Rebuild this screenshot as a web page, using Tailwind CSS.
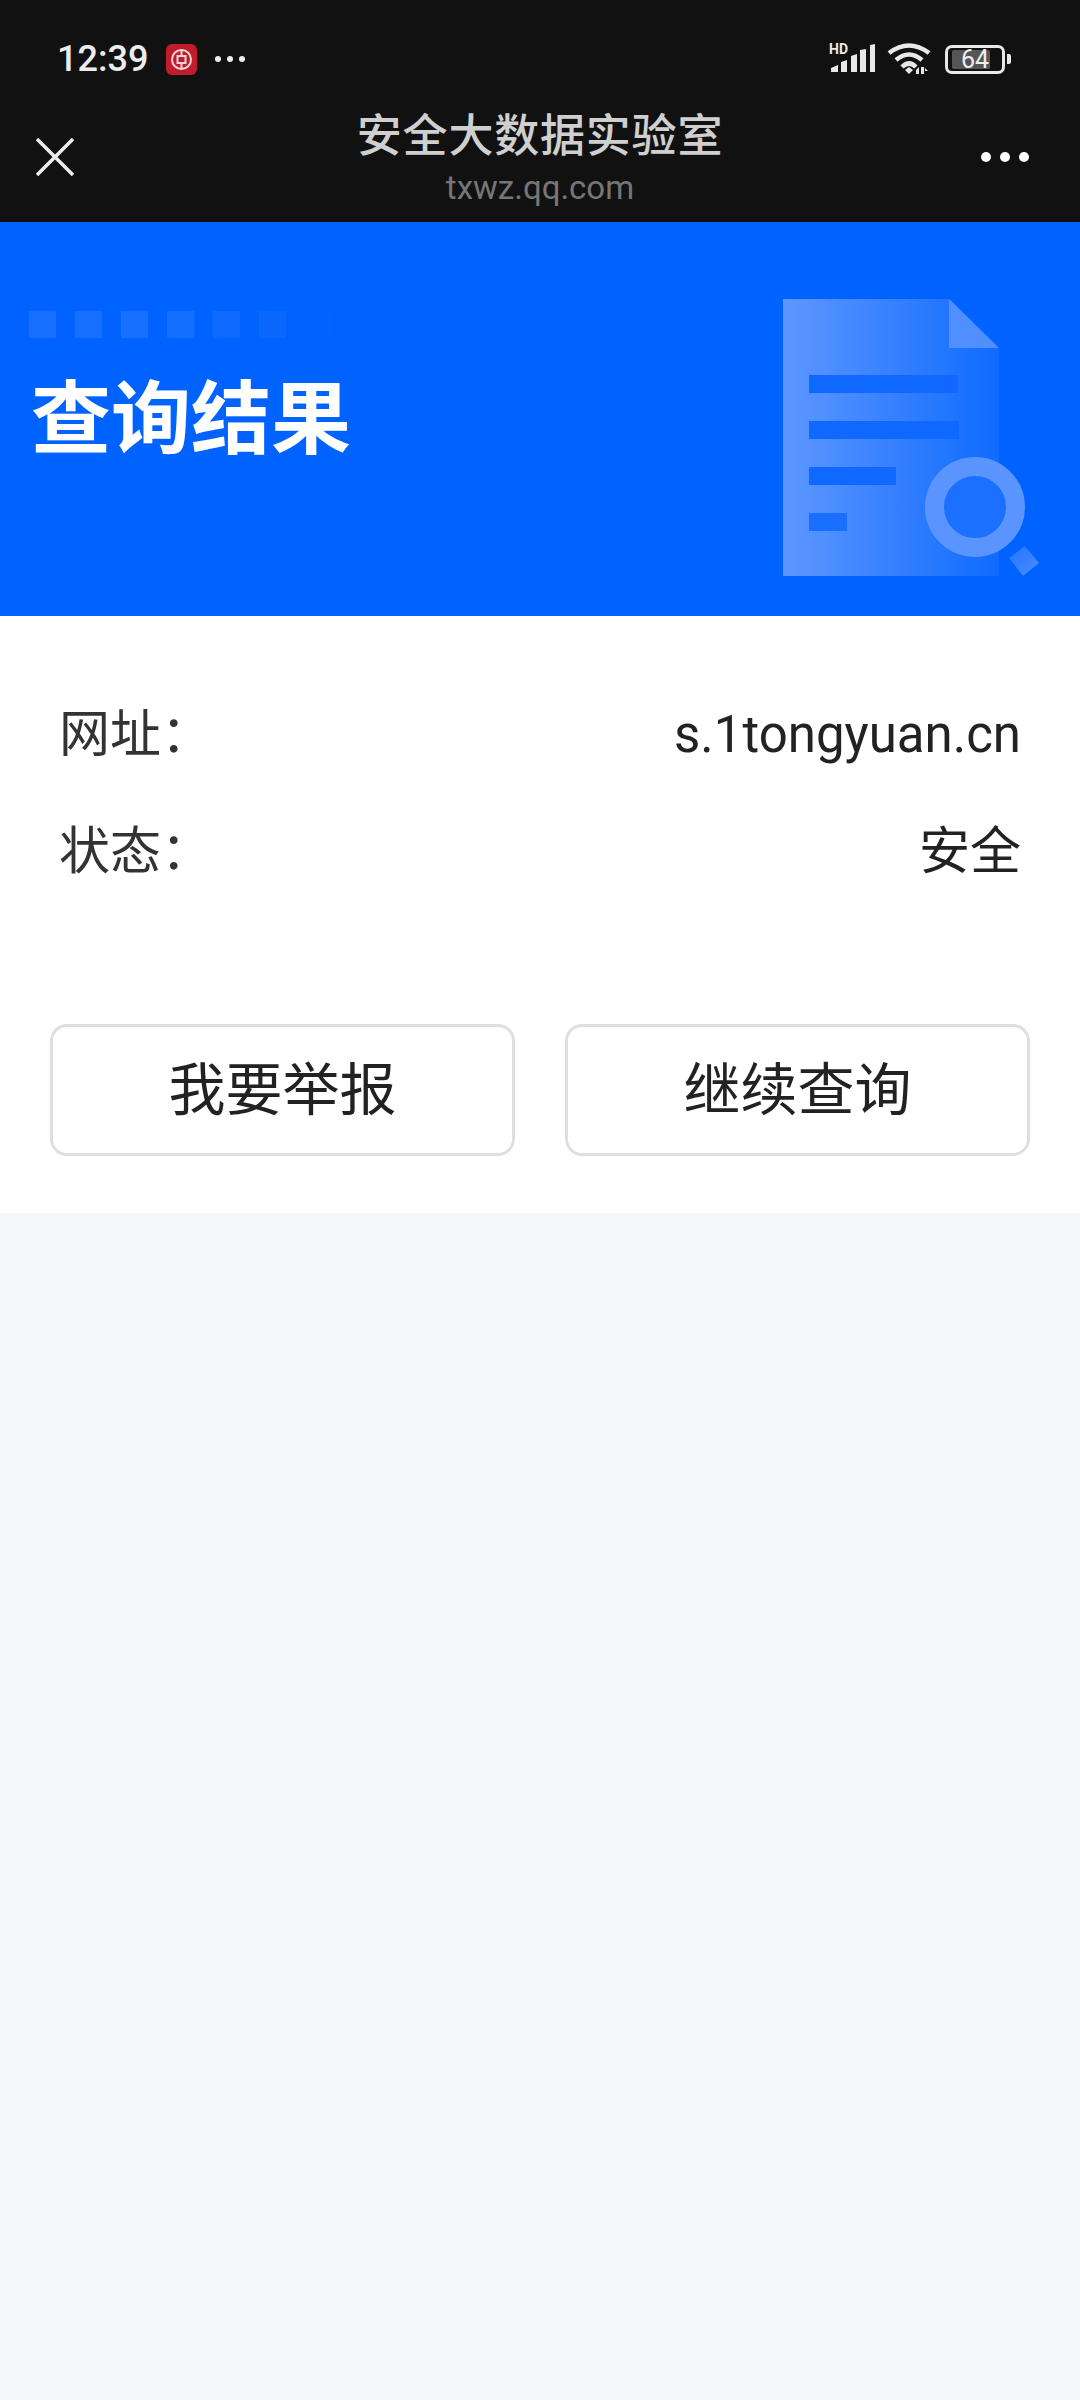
<!DOCTYPE html>
<html lang="zh-CN">
  <head>
    <meta charset="UTF-8" />
    <title>安全大数据实验室</title>
    <script src="https://cdn.jsdelivr.net/npm/@tailwindcss/browser@4"></script>
  </head>
  <body class="bg-[#f4f6fa] font-['Roboto','Noto_Sans_CJK_SC',sans-serif]">
    <div class="w-[1080px] h-[2400px] flex flex-col overflow-hidden">
      <!-- status bar + webview title -->
      <header class="h-[222px] bg-[#111112] flex flex-col shrink-0">
        <div class="h-[82px] pt-[36px] pl-[57px] pr-[69px] flex items-center justify-between">
          <div class="flex items-center">
            <span class="text-[36px] leading-none font-medium text-[#ececec] w-[109px]">12:39</span>
            <!-- bank app notification icon -->
            <svg class="w-[31px] h-[31px]" viewBox="0 0 31 31">
              <rect width="31" height="31" rx="6" fill="#c01c2c" />
              <circle cx="15.500" cy="15.500" r="9.500" fill="none" stroke="#f6d5d8" stroke-width="2" />
              <rect x="11.500" y="12" width="8" height="7" fill="none" stroke="#f6d5d8" stroke-width="2" />
              <path d="M15.500 6v5M15.500 20v5" stroke="#f6d5d8" stroke-width="2" />
            </svg>
            <div class="ml-[18px] flex gap-[6px]">
              <span class="w-[6px] h-[6px] rounded-full bg-[#eeeeee]"></span>
              <span class="w-[6px] h-[6px] rounded-full bg-[#eeeeee]"></span>
              <span class="w-[6px] h-[6px] rounded-full bg-[#eeeeee]"></span>
            </div>
          </div>
          <div class="flex items-center">
            <!-- HD + signal bars -->
            <svg class="w-[48px] h-[34px] mb-[4px]" viewBox="0 -4 48 34">
              <text x="0" y="10" font-family="Roboto" font-size="14" font-weight="700" fill="#e8e8e8">HD</text>
              <path d="M2 28v-4l7-3v7zM12 28v-10l6-2v12zM22 28v-16l6-2v18zM31 28v-22l6-1v23zM41 28v-27l5-1v28z" fill="#e8e8e8" />
            </svg>
            <!-- wifi, with the little up/down arrows -->
            <svg class="ml-[10px] w-[44px] h-[32px]" viewBox="0 0 44 32">
              <path d="M2 10Q22 -5 42 10M9 17Q22 6 35 17M15 24Q22 17 29 24" fill="none" stroke="#e8e8e8" stroke-width="4.500" />
              <path d="M18 27l4-3 4 3-4 4z" fill="#e8e8e8" />
              <path d="M29 27l3-3v7h-3zM34 24h3v7h-3zM38 25l3 3h-3z" fill="#e8e8e8" />
            </svg>
            <!-- battery -->
            <div class="ml-[14px] relative w-[60px] h-[29px] rounded-[7px] border-[3px] border-[#e8e8e8] flex items-center">
              <span class="absolute left-[4px] top-[2px] w-[38px] h-[19px] rounded-[2px] bg-[#555555]"></span>
              <span class="relative w-full text-center text-[25px] leading-none text-[#eeeeee]">64</span>
            </div>
            <span class="ml-[2px] w-[4px] h-[10px] rounded-r-[2px] bg-[#e8e8e8]"></span>
          </div>
        </div>
        <div class="relative flex-1 flex flex-col items-center">
          <h1 class="mt-[24px] text-[45px] leading-[62px] tracking-[0.8px] font-medium text-[#cfcfcf]">安全大数据实验室</h1>
          <p class="text-[33px] leading-[40px] text-[#767676]">txwz.qq.com</p>
          <!-- close -->
          <svg class="absolute left-[36px] top-[56px] w-[38px] h-[38px]" viewBox="0 0 38 38">
            <path d="M1 1l36 36M37 1L1 37" stroke="#ececec" stroke-width="3.500" />
          </svg>
          <!-- more -->
          <div class="absolute left-[981px] top-[70px] flex gap-[9px]">
            <span class="w-[10px] h-[10px] rounded-full bg-white"></span>
            <span class="w-[10px] h-[10px] rounded-full bg-white"></span>
            <span class="w-[10px] h-[10px] rounded-full bg-white"></span>
          </div>
        </div>
      </header>

      <!-- blue banner -->
      <section class="relative h-[394px] bg-[#0062ff] shrink-0 pl-[29px] pt-[89px]">
        <div class="flex gap-[19px]">
          <span class="w-[27px] h-[27px] bg-white/[0.09]"></span>
          <span class="w-[27px] h-[27px] bg-white/[0.09]"></span>
          <span class="w-[27px] h-[27px] bg-white/[0.09]"></span>
          <span class="w-[27px] h-[27px] bg-white/[0.08]"></span>
          <span class="w-[27px] h-[27px] bg-white/[0.06]"></span>
          <span class="w-[27px] h-[27px] bg-white/[0.04]"></span>
          <span class="w-[27px] h-[27px] bg-white/[0.01]"></span>
        </div>
        <h2 class="mt-[27px] ml-[2px] text-[80px] leading-[110px] font-bold text-white">查询结果</h2>
        <!-- document with magnifier -->
        <svg class="absolute left-[783px] top-[77px] w-[260px] h-[290px]" viewBox="0 0 260 290">
          <defs>
            <linearGradient id="docFill" x1="0" y1="0" x2="1" y2="0">
              <stop offset="0" stop-color="#5e97ff" />
              <stop offset="1" stop-color="#0f6bff" />
            </linearGradient>
            <linearGradient id="handleFill" x1="0" y1="0" x2="1" y2="1">
              <stop offset="0" stop-color="#1f74ff" />
              <stop offset="1" stop-color="#4f8dff" />
            </linearGradient>
          </defs>
          <path d="M0 0H167L216 49V277H0z" fill="url(#docFill)" />
          <path d="M166 0L216 49H166z" fill="#4f8fff" />
          <rect x="26" y="76" width="149" height="18" fill="#0f68ff" />
          <rect x="26" y="122" width="150" height="18" fill="#0f68ff" />
          <rect x="26" y="168" width="87" height="18" fill="#0f68ff" />
          <rect x="26" y="214" width="38" height="18" fill="#1a6fff" />
          <circle cx="192" cy="208" r="40.500" fill="#1c70ff" stroke="#5a94ff" stroke-width="19" />
          <path d="M226 259L242 247L256 264L240 277z" fill="url(#handleFill)" />
        </svg>
      </section>

      <!-- result card -->
      <main class="h-[597px] bg-white shrink-0 text-[#222222]">
        <dl class="pt-[89px] pl-[59px] pr-[59px] text-[51px] leading-[60px]">
          <div class="flex justify-between">
            <dt class="text-[#333333]">网址：</dt>
            <dd>s.1tongyuan.cn</dd>
          </div>
          <div class="mt-[57px] flex justify-between">
            <dt class="text-[#333333]">状态：</dt>
            <dd>安全</dd>
          </div>
        </dl>
        <div class="mt-[142px] pl-[50px] pr-[50px] flex justify-between">
          <button class="w-[465px] h-[132px] pt-[2px] rounded-[17px] border-[3px] border-[#dfdfdf] text-[57px] text-[#222222]">我要举报</button>
          <button class="w-[465px] h-[132px] pt-[2px] rounded-[17px] border-[3px] border-[#dfdfdf] text-[57px] text-[#222222]">继续查询</button>
        </div>
      </main>

      <div class="flex-1 bg-[#f4f6fa]"></div>
    </div>
  </body>
</html>
